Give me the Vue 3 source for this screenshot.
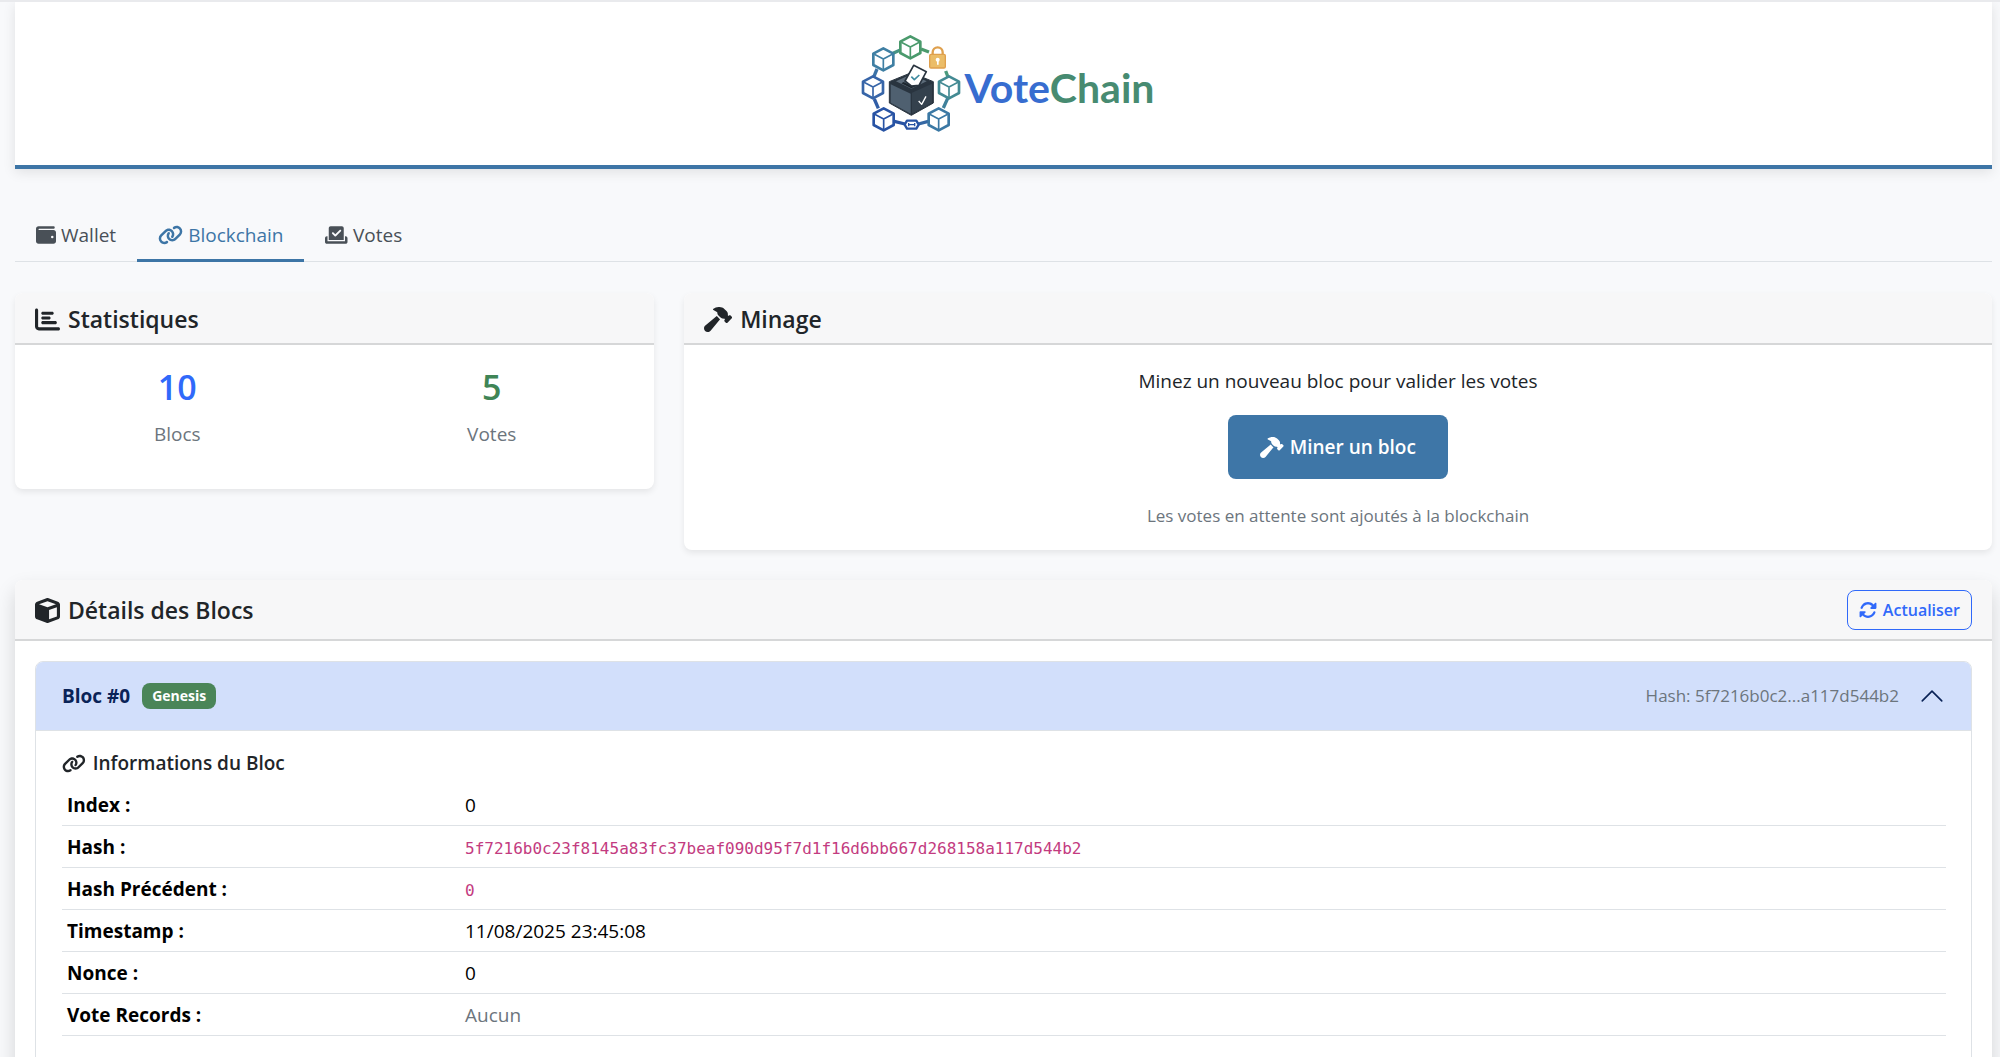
<script setup>
import { ref } from 'vue'

const icons = {
  wallet: { w: 512, d: 'M64 32C28.7 32 0 60.7 0 96V416c0 35.3 28.7 64 64 64H448c35.3 0 64-28.7 64-64V192c0-35.3-28.7-64-64-64H80c-8.8 0-16-7.2-16-16s7.2-16 16-16H448c17.7 0 32-14.3 32-32s-14.3-32-32-32H64zM416 272a32 32 0 1 1 0 64 32 32 0 1 1 0-64z' },
  link: { w: 640, d: 'M579.8 267.7c56.5-56.5 56.5-148 0-204.5c-50-50-128.8-56.5-186.3-15.4l-1.6 1.1c-14.4 10.3-17.7 30.3-7.4 44.6s30.3 17.7 44.6 7.4l1.6-1.1c32.1-22.9 76-19.3 103.8 8.6c31.5 31.5 31.5 82.5 0 114L422.3 334.8c-31.5 31.5-82.5 31.5-114 0c-27.9-27.9-31.5-71.8-8.6-103.8l1.1-1.6c10.3-14.4 6.9-34.4-7.4-44.6s-34.4-6.9-44.6 7.4l-1.1 1.6C206.5 251.2 213 330 263 380c56.5 56.5 148 56.5 204.5 0L579.8 267.7zM60.2 244.3c-56.5 56.5-56.5 148 0 204.5c50 50 128.8 56.5 186.3 15.4l1.6-1.1c14.4-10.3 17.7-30.3 7.4-44.6s-30.3-17.7-44.6-7.4l-1.6 1.1c-32.1 22.9-76 19.3-103.8-8.6C74 372 74 321 105.5 289.5L217.7 177.2c31.5-31.5 82.5-31.5 114 0c27.9 27.9 31.5 71.8 8.6 103.9l-1.1 1.6c-10.3 14.4-6.9 34.4 7.4 44.6s34.4 6.9 44.6-7.4l1.1-1.6C433.5 260.8 427 182 377 132c-56.5-56.5-148-56.5-204.5 0L60.2 244.3z' },
  vote: { w: 576, d: 'M96 80c0-26.5 21.5-48 48-48H432c26.5 0 48 21.5 48 48V384H96V80zm313 47c-9.4-9.4-24.6-9.4-33.9 0l-111 111-47-47c-9.4-9.4-24.6-9.4-33.9 0s-9.4 24.6 0 33.9l64 64c9.4 9.4 24.6 9.4 33.9 0L409 161c9.4-9.4 9.4-24.6 0-33.9zM0 336c0-26.5 21.5-48 48-48H64V416H512V288h16c26.5 0 48 21.5 48 48v96c0 26.5-21.5 48-48 48H48c-26.5 0-48-21.5-48-48V336z' },
  chart: { w: 512, d: 'M32 32c17.7 0 32 14.3 32 32V400c0 8.8 7.2 16 16 16H480c17.7 0 32 14.3 32 32s-14.3 32-32 32H80c-44.2 0-80-35.8-80-80V64C0 46.3 14.3 32 32 32zm96 96c0-17.7 14.3-32 32-32l192 0c17.7 0 32 14.3 32 32s-14.3 32-32 32H160c-17.7 0-32-14.3-32-32zm32 64H288c17.7 0 32 14.3 32 32s-14.3 32-32 32H160c-17.7 0-32-14.3-32-32s14.3-32 32-32zm0 96H416c17.7 0 32 14.3 32 32s-14.3 32-32 32H160c-17.7 0-32-14.3-32-32s14.3-32 32-32z' },
  hammer: { w: 576, d: 'M413.5 237.5c-28.2 4.8-58.2-3.6-80-25.4l-38.1-38.1C280.4 159 272 138.8 272 117.6V105.5L192.3 62c-5.3-2.9-8.6-8.6-8.3-14.7s3.9-11.5 9.5-14l47.2-21C259.1 4.2 279 0 299.2 0h18.1c36.7 0 72 14 98.7 39.1l44.6 42c24.2 22.8 33.2 55.7 26.6 86L503 183l8-8c9.4-9.4 24.6-9.4 33.9 0l24 24c9.4 9.4 9.4 24.6 0 33.9l-88 88c-9.4 9.4-24.6 9.4-33.9 0l-24-24c-9.4-9.4-9.4-24.6 0-33.9l8-8-17.5-17.5zM27.4 377.1L260.9 182.6c3.5 4.9 7.5 9.6 11.8 14l38.1 38.1c6 6 12.4 11.2 19.2 15.7L134.9 484.6c-14.5 17.4-36 27.4-58.6 27.4C34.1 512 0 477.8 0 435.7c0-22.6 10.1-44.1 27.4-58.6z' },
  cube: { w: 512, d: 'M234.5 5.7c13.9-5 29.1-5 43.1 0l192 68.6C495 83.4 512 107.5 512 134.6V377.4c0 27-17 51.2-42.5 60.3l-192 68.6c-13.9 5-29.1 5-43.1 0l-192-68.6C17 428.6 0 404.5 0 377.4V134.6c0-27 17-51.2 42.5-60.3l192-68.6zM256 66L82.3 128 256 190l173.7-62L256 66zm32 368.6l160-57.1v-188L288 246.6v188z' },
  rotate: { w: 512, d: 'M142.9 142.9c62.2-62.2 162.7-62.5 225.3-1L327 183c-6.9 6.9-8.9 17.2-5.2 26.2s12.5 14.8 22.2 14.8H463.5c0 0 0 0 0 0H472c13.3 0 24-10.7 24-24V72c0-9.7-5.8-18.5-14.8-22.2s-19.3-1.7-26.2 5.2L413.4 96.6c-87.6-86.5-228.7-86.2-315.8 1C73.2 122 55.6 150.7 44.8 181.4c-5.9 16.7 2.9 34.9 19.5 40.8s34.9-2.9 40.8-19.5c7.7-21.8 20.2-42.3 37.8-59.8zM16 312v7.6 .7V440c0 9.7 5.8 18.5 14.8 22.2s19.3 1.7 26.2-5.2l41.6-41.6c87.6 86.5 228.7 86.2 315.8-1c24.4-24.4 42.1-53.1 52.9-83.7c5.9-16.7-2.9-34.9-19.5-40.8s-34.9 2.9-40.8 19.5c-7.7 21.8-20.2 42.3-37.8 59.8c-62.2 62.2-162.7 62.5-225.3 1L185 329c6.9-6.9 8.9-17.2 5.2-26.2s-12.5-14.8-22.2-14.8H48.4h-.7H40c-13.3 0-24 10.7-24 24z' },
}

const tabs = [
  { id: 'wallet', label: 'Wallet', icon: icons.wallet },
  { id: 'blockchain', label: 'Blockchain', icon: icons.link },
  { id: 'votes', label: 'Votes', icon: icons.vote },
]
const activeTab = ref('blockchain')
const open = ref(true)

const stats = [
  { value: 10, label: 'Blocs', tone: 'primary' },
  { value: 5, label: 'Votes', tone: 'success' },
]

const rows = [
  { label: 'Index :', value: '0' },
  { label: 'Hash :', value: '5f7216b0c23f8145a83fc37beaf090d95f7d1f16d6bb667d268158a117d544b2', kind: 'code' },
  { label: 'Hash Précédent :', value: '0', kind: 'code' },
  { label: 'Timestamp :', value: '11/08/2025 23:45:08' },
  { label: 'Nonce :', value: '0' },
  { label: 'Vote Records :', value: 'Aucun', kind: 'muted' },
]

const logoCubes = [
  { x: 208, y: 80, color: '#4a9a6c' },
  { x: 127, y: 116, color: '#3f7fa3' },
  { x: 96, y: 200, color: '#3765a8' },
  { x: 128, y: 296, color: '#2853a4' },
  { x: 293, y: 296, color: '#3b78a4' },
  { x: 324, y: 200, color: '#438a93' },
]
</script>

<template>
  <div class="page">
    <header class="banner">
      <svg class="logo" viewBox="60 40 300 300" aria-hidden="true">
        <g fill="none" stroke-width="10">
          <path d="M156 98l22-10" stroke="#469384" />
          <path d="M240 85l24 9" stroke="#4a9a6c" />
          <path d="M108 145l-9 22" stroke="#3b72a6" />
          <path d="M100 235l12 28" stroke="#305da6" />
          <path d="M160 302l32 8" stroke="#2853a4" />
          <path d="M232 310l30-8" stroke="#3568a4" />
          <path d="M307 262l13-29" stroke="#3f819b" />
          <path d="M314 151l7 18" stroke="#4a9a7c" />
        </g>
        <g
          v-for="(c, i) in logoCubes"
          :key="i"
          :transform="`translate(${c.x} ${c.y})`"
          :stroke="c.color"
          fill="none"
          stroke-linejoin="round"
        >
          <path d="M0-33L30-17V17L0 33L-30 17V-17Z" fill="#fff" stroke-width="8" />
          <path d="M-27-15L0-1L27-15M0-1V30" stroke-width="5" />
        </g>
        <g fill="none">
          <path d="M198 300h28l7 12-7 12h-28l-7-12z" fill="#fff" stroke="#2853a4" stroke-width="7" stroke-linejoin="round" />
          <path d="M203 307v10M203 312h18M221 307v10" stroke="#2853a4" stroke-width="4" />
        </g>
        <g stroke-linejoin="round">
          <path d="M275 101V95a15 15 0 0 1 30 0v6" fill="none" stroke="#dfa04d" stroke-width="7" />
          <rect x="266" y="101" width="47" height="41" rx="4" fill="#ebbd68" stroke="#dfa04d" stroke-width="4" />
          <circle cx="290" cy="117" r="6" fill="#fff" />
          <path d="M288 118h5v14h-5z" fill="#fff" />
        </g>
        <g stroke-linejoin="round">
          <path d="M211 156L277 183V247L211 284L145 247V183Z" fill="#29343f" stroke="#29343f" stroke-width="3" />
          <path d="M149 191L209 219V279L149 246Z" fill="#4f6070" />
          <path d="M213 216L273 189V246L213 279Z" fill="#34414d" />
          <path d="M165 182L211 161L257 182L211 204Z" fill="#5d6c7a" />
          <path d="M181 188L211 203L238 190L234 184L211 195L188 184Z" fill="#1d262e" />
          <path d="M192 181L218 134L256 153L234 194L211 196Z" fill="#fff" stroke="#29343f" stroke-width="5" />
          <path d="M211 168l9 9 15-14" fill="none" stroke="#3f8ba0" stroke-width="5" />
          <path d="M233 241l9 10 13-24" fill="none" stroke="#fff" stroke-width="4" />
        </g>
      </svg>
      <span class="wordmark"><span class="word-vote">Vote</span><span class="word-chain">Chain</span></span>
    </header>

    <nav class="tabs">
      <button
        v-for="t in tabs"
        :key="t.id"
        type="button"
        class="tab"
        :class="{ active: activeTab === t.id }"
        @click="activeTab = t.id"
      >
        <svg class="icon" :viewBox="`0 0 ${t.icon.w} 512`" aria-hidden="true"><path :d="t.icon.d" /></svg>
        {{ t.label }}
      </button>
    </nav>

    <main>
      <div class="cards">
        <section class="card">
          <h5 class="card-header">
            <svg class="icon" viewBox="0 0 512 512" aria-hidden="true"><path :d="icons.chart.d" /></svg>
            Statistiques
          </h5>
          <div class="stats">
            <div v-for="s in stats" :key="s.label" class="stat">
              <strong class="stat-value" :class="s.tone">{{ s.value }}</strong>
              <span class="stat-label">{{ s.label }}</span>
            </div>
          </div>
        </section>

        <section class="card">
          <h5 class="card-header">
            <svg class="icon" viewBox="0 0 576 512" aria-hidden="true"><path :d="icons.hammer.d" /></svg>
            Minage
          </h5>
          <div class="mining">
            <p class="lead">Minez un nouveau bloc pour valider les votes</p>
            <button type="button" class="mine-button">
              <svg class="icon" viewBox="0 0 576 512" aria-hidden="true"><path :d="icons.hammer.d" /></svg>
              Miner un bloc
            </button>
            <p class="hint">Les votes en attente sont ajoutés à la blockchain</p>
          </div>
        </section>
      </div>

      <section class="card details">
        <div class="card-header details-header">
          <h5 class="details-title">
            <svg class="icon" viewBox="0 0 512 512" aria-hidden="true"><path :d="icons.cube.d" /></svg>
            Détails des Blocs
          </h5>
          <button type="button" class="refresh">
            <svg class="icon" viewBox="0 0 512 512" aria-hidden="true"><path :d="icons.rotate.d" /></svg>
            Actualiser
          </button>
        </div>
        <div class="details-body">
          <div class="block">
            <button type="button" class="block-header" :aria-expanded="open" @click="open = !open">
              <strong class="block-name">Bloc #0</strong>
              <span class="badge">Genesis</span>
              <span class="short-hash">Hash: 5f7216b0c2...a117d544b2</span>
              <svg class="chevron" :class="{ closed: !open }" viewBox="0 0 16 16" aria-hidden="true">
                <path d="M2 11l6-6 6 6" />
              </svg>
            </button>
            <div v-if="open" class="block-body">
              <h6 class="block-title">
                <svg class="icon" viewBox="0 0 640 512" aria-hidden="true"><path :d="icons.link.d" /></svg>
                Informations du Bloc
              </h6>
              <table class="info">
                <tbody>
                  <tr v-for="r in rows" :key="r.label">
                    <th scope="row">{{ r.label }}</th>
                    <td>
                      <code v-if="r.kind === 'code'">{{ r.value }}</code>
                      <span v-else :class="r.kind">{{ r.value }}</span>
                    </td>
                  </tr>
                </tbody>
              </table>
            </div>
          </div>
        </div>
      </section>
    </main>
  </div>
</template>

<style>
body {
  margin: 0;
  background: #f8f9fa;
}
</style>

<style scoped>
.page {
  box-sizing: border-box;
  height: 100vh;
  overflow: hidden;
  padding: 0 8px 0 15px;
  border-top: 2px solid #e9eaed;
  background: #f8f9fb;
  color: #212529;
  font: 19px/30px "Open Sans", "Noto Sans", sans-serif;
}

button {
  font: inherit;
  cursor: pointer;
}

.icon {
  flex: none;
  height: 1em;
  fill: currentColor;
}

.banner {
  display: flex;
  align-items: center;
  justify-content: center;
  gap: 4px;
  height: 163px;
  padding-left: 8px;
  border-bottom: 4px solid #3d75a6;
  background: #fff;
  box-shadow: 0 3px 12px rgba(0, 0, 0, 0.1);
}

.logo {
  width: 100px;
  height: 100px;
}

.wordmark {
  padding-top: 8px;
  font: 700 41px/46px Lato, sans-serif;
}

.word-vote {
  color: #376dd0;
}

.word-chain {
  color: #478b71;
}

.tabs {
  display: flex;
  margin-top: 40px;
  border-bottom: 1px solid #dee2e6;
}

.tab {
  display: flex;
  align-items: center;
  gap: 5px;
  margin-bottom: -1px;
  padding: 11px 21px 9px;
  border: 0;
  border-bottom: 3px solid transparent;
  background: none;
  color: #495057;
}

.tab .icon {
  height: 20px;
}

.tab.active {
  border-bottom-color: #3d75a6;
  color: #3d75a6;
}

.cards {
  display: grid;
  grid-template-columns: 639fr 1308fr;
  align-items: start;
  gap: 30px;
  margin: 31px 0 30px;
}

.card {
  border-radius: 8px;
  background: #fff;
  box-shadow: 0 3px 6px rgba(0, 0, 0, 0.08);
}

.card-header {
  display: flex;
  align-items: center;
  gap: 8px;
  margin: 0;
  padding: 11px 20px 9px;
  border-bottom: 2px solid #d6d7d8;
  border-radius: 8px 8px 0 0;
  background: #f7f7f8;
  font-size: 23px;
  font-weight: 600;
  line-height: 30px;
}

.card-header .icon {
  height: 25px;
}

.stats {
  display: grid;
  grid-template-columns: 1fr 1fr;
  padding: 20px 5px 40px;
  text-align: center;
}

.stat {
  display: flex;
  flex-direction: column;
  gap: 10px;
}

.stat-value {
  font-size: 34px;
  font-weight: 600;
  line-height: 44px;
}

.primary {
  color: #3069fa;
}

.success {
  color: #3f8556;
}

.stat-label,
.muted {
  color: #6c757d;
}

.mining {
  display: flex;
  flex-direction: column;
  align-items: center;
  padding: 21px 20px 19px;
}

.lead,
.hint {
  margin: 0;
}

.hint {
  color: #6c757d;
  font-size: 17px;
}

.mine-button {
  display: flex;
  align-items: center;
  gap: 6px;
  margin: 19px 0 22px;
  padding: 17px 32px;
  border: 0;
  border-radius: 8px;
  background: #3e76a7;
  color: #fff;
  font-weight: 600;
}

.mine-button .icon {
  height: 21px;
}

.details {
  box-shadow: 0 10px 20px rgba(0, 0, 0, 0.15);
}

.details-header {
  justify-content: space-between;
  padding: 10px 20px 9px;
}

.details-title {
  display: flex;
  align-items: center;
  gap: 8px;
  margin: 0;
  font-size: 23px;
  font-weight: 600;
}

.details-header .refresh {
  display: flex;
  align-items: center;
  gap: 6px;
  padding: 4px 11px;
  border: 1px solid #3069fa;
  border-radius: 8px;
  background: none;
  color: #3069fa;
  font-size: 16px;
  font-weight: 600;
}

.details-header .refresh .icon {
  height: 18px;
}

.details-body {
  padding: 20px;
}

.block {
  border: 1px solid #dee2e6;
  border-radius: 8px 8px 0 0;
}

.block-header {
  display: flex;
  align-items: center;
  width: 100%;
  padding: 19px 26px;
  border: 0;
  border-bottom: 1px solid #dee2e6;
  border-radius: 7px 7px 0 0;
  background: #d2dffb;
  color: #0a2357;
}

.block-name {
  font-weight: 700;
}

.badge {
  margin-left: 12px;
  padding: 0 10px;
  border-radius: 8px;
  background: #4a8558;
  color: #fff;
  font-size: 14px;
  font-weight: 700;
  line-height: 26px;
}

.short-hash {
  margin-left: auto;
  color: #6c757d;
  font-size: 17px;
}

.chevron {
  width: 26px;
  height: 26px;
  margin-left: 20px;
  fill: none;
  stroke: currentColor;
  stroke-linecap: round;
  stroke-linejoin: round;
}

.chevron.closed {
  transform: rotate(180deg);
}

.block-body {
  padding: 17px 25px 25px 26px;
}

.block-title {
  display: flex;
  align-items: center;
  gap: 7px;
  margin: 0 0 6px;
  font-size: 19px;
  font-weight: 600;
}

.info {
  width: 100%;
  border-collapse: collapse;
  color: #000;
}

.info th,
.info td {
  padding: 6px 5px 5px;
  border-bottom: 1px solid #dee2e6;
  text-align: left;
}

.info th {
  width: 388px;
  font-weight: 700;
}

code {
  color: #c33b80;
  font: 16px/20px "DejaVu Sans Mono", monospace;
}
</style>
